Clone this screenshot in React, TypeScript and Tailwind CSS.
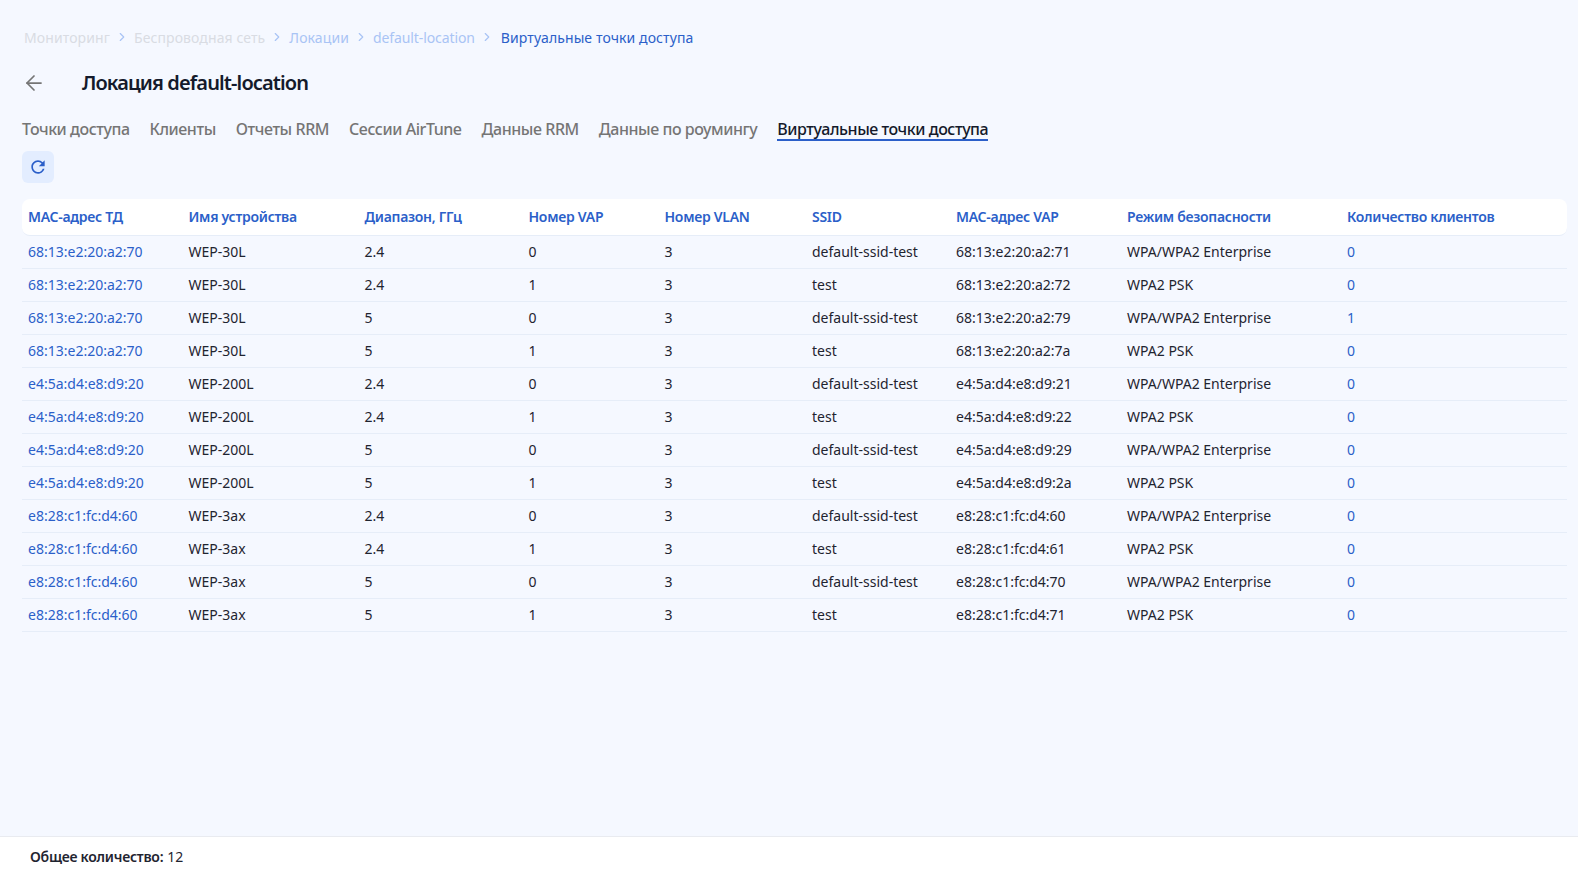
import React from "react";
import { ArrowLeft, ChevronRight } from "lucide-react";
import { MdRefresh } from "react-icons/md";

const crumbs = [
  { label: "Мониторинг", color: "text-[#d9dce3]" },
  { label: "Беспроводная сеть", color: "text-[#d9dce3]" },
  { label: "Локации", color: "text-[#a9c4f5]" },
  { label: "default-location", color: "text-[#a9c4f5] tracking-[-0.1px]" },
];

const tabs = ["Точки доступа", "Клиенты", "Отчеты RRM", "Сессии AirTune", "Данные RRM", "Данные по роумингу"];

const columns = [
  { title: "MAC-адрес ТД", width: "w-[160.5px]" },
  { title: "Имя устройства", width: "w-[176px]" },
  { title: "Диапазон, ГГц", width: "w-[164px]" },
  { title: "Номер VAP", width: "w-[136px]" },
  { title: "Номер VLAN", width: "w-[147.5px]" },
  { title: "SSID", width: "w-[144px]" },
  { title: "MAC-адрес VAP", width: "w-[171px]" },
  { title: "Режим безопасности", width: "w-[220px]" },
  { title: "Количество клиентов", width: "" },
];

const ENT = "WPA/WPA2 Enterprise";
const PSK = "WPA2 PSK";
const SSID = "default-ssid-test";

const rows = [
  ["68:13:e2:20:a2:70", "WEP-30L", "2.4", "0", "3", SSID, "68:13:e2:20:a2:71", ENT, "0"],
  ["68:13:e2:20:a2:70", "WEP-30L", "2.4", "1", "3", "test", "68:13:e2:20:a2:72", PSK, "0"],
  ["68:13:e2:20:a2:70", "WEP-30L", "5", "0", "3", SSID, "68:13:e2:20:a2:79", ENT, "1"],
  ["68:13:e2:20:a2:70", "WEP-30L", "5", "1", "3", "test", "68:13:e2:20:a2:7a", PSK, "0"],
  ["e4:5a:d4:e8:d9:20", "WEP-200L", "2.4", "0", "3", SSID, "e4:5a:d4:e8:d9:21", ENT, "0"],
  ["e4:5a:d4:e8:d9:20", "WEP-200L", "2.4", "1", "3", "test", "e4:5a:d4:e8:d9:22", PSK, "0"],
  ["e4:5a:d4:e8:d9:20", "WEP-200L", "5", "0", "3", SSID, "e4:5a:d4:e8:d9:29", ENT, "0"],
  ["e4:5a:d4:e8:d9:20", "WEP-200L", "5", "1", "3", "test", "e4:5a:d4:e8:d9:2a", PSK, "0"],
  ["e8:28:c1:fc:d4:60", "WEP-3ax", "2.4", "0", "3", SSID, "e8:28:c1:fc:d4:60", ENT, "0"],
  ["e8:28:c1:fc:d4:60", "WEP-3ax", "2.4", "1", "3", "test", "e8:28:c1:fc:d4:61", PSK, "0"],
  ["e8:28:c1:fc:d4:60", "WEP-3ax", "5", "0", "3", SSID, "e8:28:c1:fc:d4:70", ENT, "0"],
  ["e8:28:c1:fc:d4:60", "WEP-3ax", "5", "1", "3", "test", "e8:28:c1:fc:d4:71", PSK, "0"],
];

export default function App() {
  return (
    <div className="flex flex-col h-[877px] bg-[#f5f8ff] font-['Noto_Sans',sans-serif] text-[14px] text-[#1f2430]">
      <main className="flex-1 pl-[22px] pr-[11px] pt-[27px]">
        <nav className="flex items-center h-[20px] pl-[2px] gap-[5px] tracking-[0.1px]">
          {crumbs.map((c) => (
            <React.Fragment key={c.label}>
              <span className={c.color}>{c.label}</span>
              <ChevronRight size={14} strokeWidth={2} className="text-[#a9c4f5]" />
            </React.Fragment>
          ))}
          <span className="ml-[2px] text-[#2b5fc9]">Виртуальные точки доступа</span>
        </nav>

        <div className="flex items-center h-[28px] mt-[22px]">
          <ArrowLeft size={24} strokeWidth={1.75} className="text-[#757575]" />
          <h1 className="ml-[36px] text-[20px] leading-[28px] font-semibold tracking-[-0.88px] text-[#141a2b]">
            Локация default-location
          </h1>
        </div>

        <div className="flex mt-[20px] h-[28px] gap-[20px] text-[16px] leading-[24px] font-medium tracking-[-0.44px] text-[#757575]">
          {tabs.map((t) => (
            <span key={t}>{t}</span>
          ))}
          <span className="h-[24px] border-b-2 border-[#2b5fc9] text-[#141a2b]">Виртуальные точки доступа</span>
        </div>

        <button className="flex items-center justify-center w-[32px] h-[32px] mt-[6px] rounded-[6px] bg-[#e3edff] text-[#2b5fc9]">
          <MdRefresh size={20} />
        </button>

        <table className="table-fixed w-[1545px] mt-[16px] border-separate border-spacing-0">
          <thead>
            <tr className="h-[37px]">
              {columns.map((col, i) => (
                <th
                  key={col.title}
                  className={`${col.width} bg-white border-b border-[#e6edf8] px-[6px] pb-[1px] text-left font-semibold tracking-[-0.28px] text-[#2b5fc9] ${i === 0 ? "rounded-tl-[8px] rounded-bl-[8px]" : ""} ${i === columns.length - 1 ? "rounded-tr-[8px] rounded-br-[8px]" : ""}`}
                >
                  {col.title}
                </th>
              ))}
            </tr>
          </thead>
          <tbody>
            {rows.map((row, r) => (
              <tr key={r} className="h-[33px]">
                {row.map((cell, i) => (
                  <td
                    key={i}
                    className={`border-b border-[#e6edf8] px-[6px] pb-[2px] ${i === 0 || i === 8 ? "text-[#2b5fc9]" : ""}`}
                  >
                    {cell}
                  </td>
                ))}
              </tr>
            ))}
          </tbody>
        </table>
      </main>

      <footer className="flex items-center h-[41px] pb-[2px] pl-[30px] bg-white border-t border-[#e9ebf0]">
        <span className="font-semibold tracking-[-0.25px]">Общее количество:</span>
        <span className="ml-[4px]">12</span>
      </footer>
    </div>
  );
}
